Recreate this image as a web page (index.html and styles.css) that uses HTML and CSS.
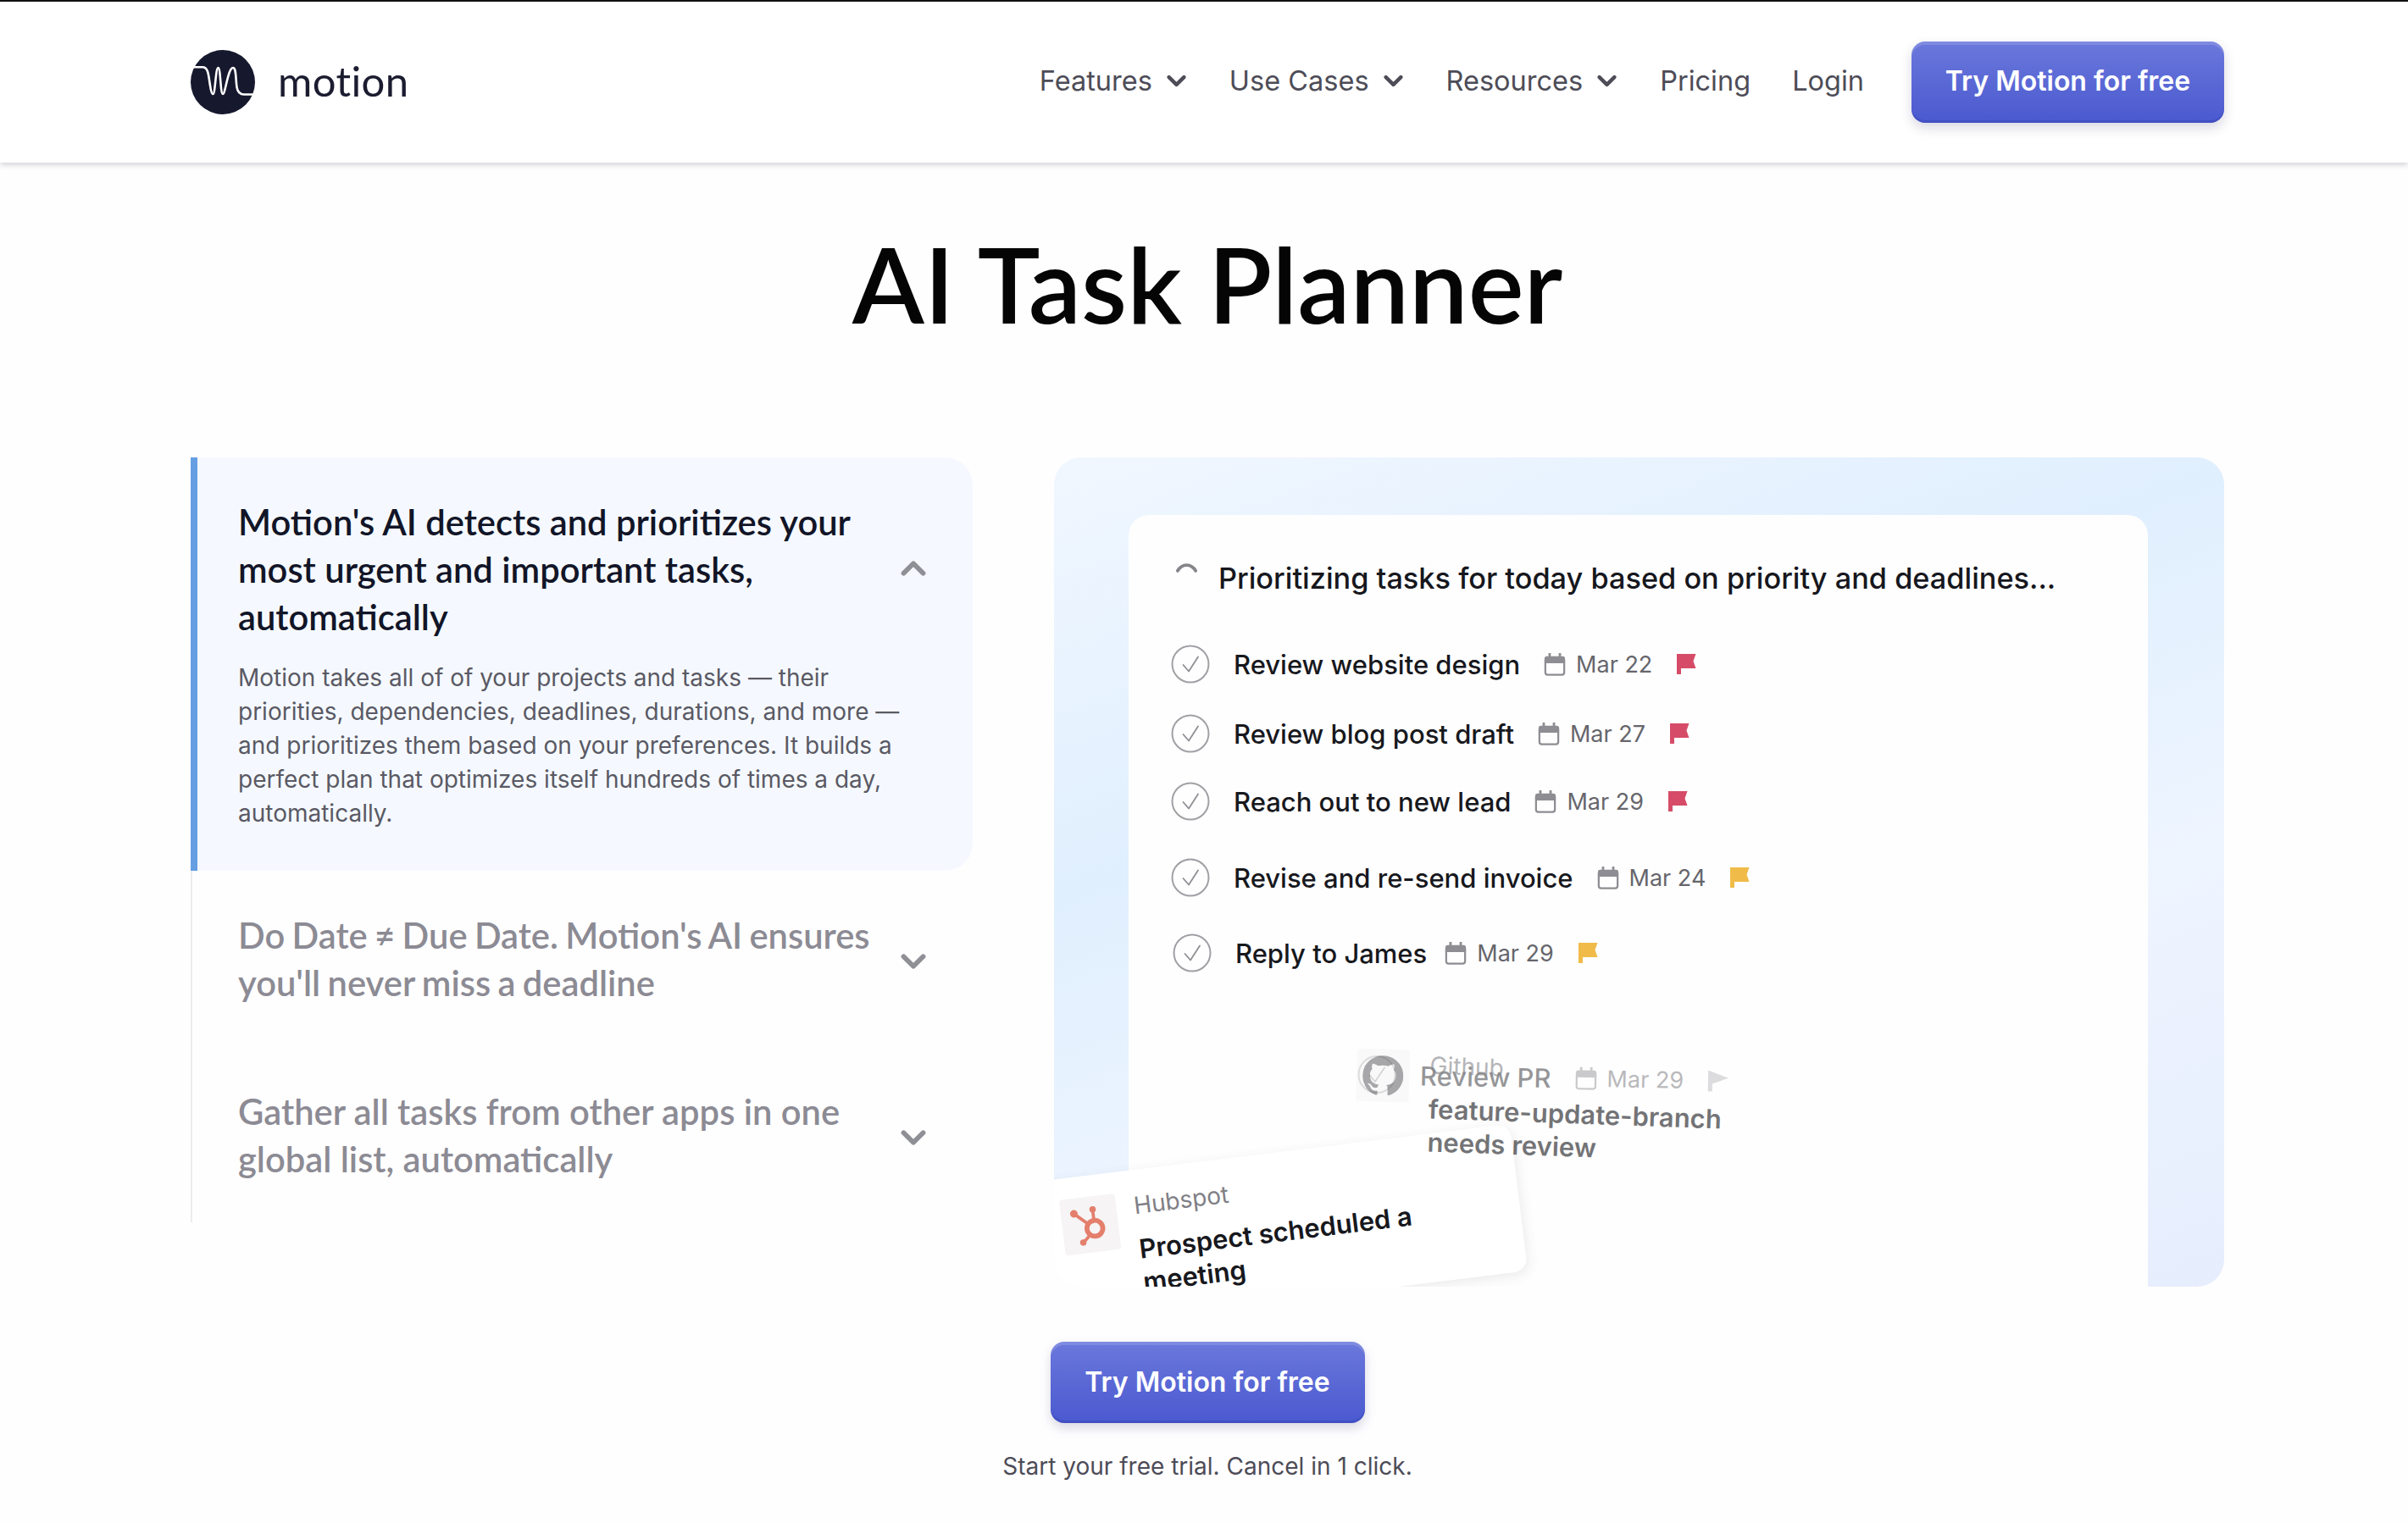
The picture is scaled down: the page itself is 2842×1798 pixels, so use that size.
FILE: index.html
```html
<!DOCTYPE html>
<html lang="en">
  <head>
    <meta charset="UTF-8" />
    <meta name="viewport" content="width=device-width, initial-scale=1.0" />
    <title>AI Task Planner - Motion</title>
    <link rel="stylesheet" href="styles.css">
  </head>
  <body>
    <svg class="icon-defs" width="0" height="0">
      <symbol id="chev-down" viewBox="0 0 26 16"><path d="M3 3l10 10L23 3" fill="none" stroke="currentColor" stroke-width="5" stroke-linecap="round" stroke-linejoin="round"/></symbol>
      <symbol id="chev-up" viewBox="0 0 26 16"><path d="M3 13L13 3l10 10" fill="none" stroke="currentColor" stroke-width="5" stroke-linecap="round" stroke-linejoin="round"/></symbol>
      <symbol id="check" viewBox="0 0 46 46"><circle cx="23" cy="23" r="21.5" fill="none" stroke="#a0a0a5" stroke-width="2"/><path d="M14.5 24l6.5 7.5L32 14.5" fill="none" stroke="#8f8f94" stroke-width="1.8" stroke-linecap="round" stroke-linejoin="round"/></symbol>
      <symbol id="cal" viewBox="0 0 28 30"><path d="M6 1h3v4h10V1h3v4h2a3 3 0 0 1 3 3v6H1V8a3 3 0 0 1 3-3h2z" fill="currentColor"/><rect x="2" y="7" width="24" height="21.5" rx="3" fill="none" stroke="currentColor" stroke-width="2.4"/></symbol>
      <symbol id="flag" viewBox="0 0 26 30"><path d="M1 3h22.500l-3 8.500 3 8.500H6v7H1z" fill="currentColor"/></symbol>
      <symbol id="flag-thin" viewBox="0 0 26 30"><path d="M1 3l24 9-19 7v9H1z" fill="currentColor"/></symbol>
    </svg>

    <header class="site-header">
      <div class="header-inner">
        <a class="brand">
          <svg class="brand-mark" viewBox="0 0 76 76">
            <circle cx="38" cy="38" r="38" fill="#16182e"/>
            <path d="M2.500 20.300H14c7 0 7 9.700 9 21.700 1 7 2 10 3.500 10 2.500 0 3-31 6-31s2.500 31 5.500 31 6-31 12-31c4 0 3 13 4.500 23 1 6 3.500 8.500 8.500 8.500h12" fill="none" stroke="#fff" stroke-width="2.600" stroke-linecap="round"/>
          </svg>
          <span class="brand-name">motion</span>
        </a>
        <nav class="nav">
          <a class="nav-link">Features <svg class="nav-chev"><use href="#chev-down"/></svg></a>
          <a class="nav-link">Use Cases <svg class="nav-chev"><use href="#chev-down"/></svg></a>
          <a class="nav-link">Resources <svg class="nav-chev"><use href="#chev-down"/></svg></a>
          <a class="nav-link">Pricing</a>
          <a class="nav-link">Login</a>
          <a class="btn nav-btn">Try Motion for free</a>
        </nav>
      </div>
    </header>

    <main class="page">
      <h1 class="title">AI Task Planner</h1>

      <section class="columns">
        <div class="accordion">
          <div class="acc-item acc-open">
            <div class="acc-head">
              <h3>Motion's AI detects and prioritizes your most urgent and important tasks, automatically</h3>
              <svg class="acc-chev"><use href="#chev-up"/></svg>
            </div>
            <p>Motion takes all of of your projects and tasks — their priorities, dependencies, deadlines, durations, and more — and prioritizes them based on your preferences. It builds a perfect plan that optimizes itself hundreds of times a day, automatically.</p>
          </div>
          <div class="acc-item acc-tight">
            <div class="acc-head">
              <h3>Do Date ≠ Due Date. Motion's AI ensures you'll never miss a deadline</h3>
              <svg class="acc-chev"><use href="#chev-down"/></svg>
            </div>
          </div>
          <div class="acc-item">
            <div class="acc-head">
              <h3>Gather all tasks from other apps in one global list, automatically</h3>
              <svg class="acc-chev"><use href="#chev-down"/></svg>
            </div>
          </div>
        </div>

        <div class="demo">
          <div class="demo-card">
            <div class="status-line">
              <svg class="spinner" viewBox="0 0 28 14"><path d="M3 11c3-5 7-7 11-7s8 2 11 7" fill="none" stroke="#85858a" stroke-width="4" stroke-linecap="round"/></svg>
              <span>Prioritizing tasks for today based on priority and deadlines...</span>
            </div>
            <ul class="tasks">
              <li class="task">
                <svg class="task-check"><use href="#check"/></svg>
                <span class="task-name">Review website design</span>
                <span class="task-date"><svg class="cal"><use href="#cal"/></svg>Mar 22</span>
                <svg class="flag flag-red"><use href="#flag"/></svg>
              </li>
              <li class="task">
                <svg class="task-check"><use href="#check"/></svg>
                <span class="task-name">Review blog post draft</span>
                <span class="task-date"><svg class="cal"><use href="#cal"/></svg>Mar 27</span>
                <svg class="flag flag-red"><use href="#flag"/></svg>
              </li>
              <li class="task">
                <svg class="task-check"><use href="#check"/></svg>
                <span class="task-name">Reach out to new lead</span>
                <span class="task-date"><svg class="cal"><use href="#cal"/></svg>Mar 29</span>
                <svg class="flag flag-red"><use href="#flag"/></svg>
              </li>
              <li class="task">
                <svg class="task-check"><use href="#check"/></svg>
                <span class="task-name">Revise and re-send invoice</span>
                <span class="task-date"><svg class="cal"><use href="#cal"/></svg>Mar 24</span>
                <svg class="flag flag-yellow"><use href="#flag"/></svg>
              </li>
              <li class="task task-last">
                <svg class="task-check"><use href="#check"/></svg>
                <span class="task-name">Reply to James</span>
                <span class="task-date"><svg class="cal"><use href="#cal"/></svg>Mar 29</span>
                <svg class="flag flag-yellow"><use href="#flag"/></svg>
              </li>
            </ul>
          </div>

          <div class="task ghost-task">
            <svg class="task-check"><use href="#check"/></svg>
            <span class="task-name">Review PR</span>
            <span class="task-date"><svg class="cal"><use href="#cal"/></svg>Mar 29</span>
            <svg class="flag flag-grey"><use href="#flag-thin"/></svg>
          </div>

          <div class="float-card hubspot-card">
            <div class="float-logo">
              <svg viewBox="0 0 40 40">
                <g fill="none" stroke="#e47f6c" stroke-linecap="round">
                  <circle cx="24" cy="24" r="7.500" stroke-width="4.600"/>
                  <path d="M24 16V7M18 19L7 9M18.500 30L12 36" stroke-width="3"/>
                </g>
                <circle cx="24" cy="6" r="3" fill="#e47f6c"/>
                <circle cx="6" cy="8" r="3.600" fill="#e47f6c"/>
                <circle cx="11.500" cy="36" r="3" fill="#e47f6c"/>
              </svg>
            </div>
            <div class="float-text">
              <span class="float-source">Hubspot</span>
              <span class="float-msg">Prospect scheduled a<br>meeting</span>
            </div>
          </div>

          <div class="float-card github-card">
            <div class="float-logo">
              <svg viewBox="0 0 24 24"><path fill="#6f6f73" d="M12 .3a12 12 0 0 0-3.800 23.400c.6.1.8-.3.8-.6v-2c-3.300.7-4-1.600-4-1.600-.6-1.400-1.400-1.800-1.400-1.800-1-.7.1-.7.1-.7 1.200.1 1.800 1.200 1.800 1.200 1 1.800 2.800 1.300 3.500 1 .1-.8.4-1.300.8-1.600-2.700-.3-5.500-1.300-5.500-6 0-1.200.5-2.300 1.300-3.100-.2-.4-.6-1.600 0-3.200 0 0 1-.3 3.400 1.200a11.500 11.500 0 0 1 6 0c2.300-1.500 3.300-1.200 3.300-1.200.6 1.600.2 2.800 0 3.200.9.8 1.300 1.900 1.300 3.200 0 4.600-2.800 5.600-5.500 5.900.5.4.9 1 .9 2.200v3.300c0 .3.1.7.8.6A12 12 0 0 0 12 .3"/></svg>
            </div>
            <div class="float-text">
              <span class="float-source">Github</span>
              <span class="float-msg">feature-update-branch<br>needs review</span>
            </div>
          </div>
        </div>
      </section>

      <div class="cta">
        <a class="btn">Try Motion for free</a>
        <p>Start your free trial. Cancel in 1 click.</p>
      </div>
    </main>
  </body>
</html>
```

FILE: styles.css
```css
body {
  margin: 0;
  background-color: #fffeff;
  font-family: Inter, "Liberation Sans", sans-serif;
  color: #4d4c57;
}
.icon-defs {
  position: absolute;
}
h1,
h3,
p,
ul {
  margin: 0;
  padding: 0;
}

/* header */
.site-header {
  height: 190px;
  background-color: #fff;
  border-top: 2px solid #111;
  box-shadow: 0 3px 6px rgba(30, 30, 50, 0.18);
}
.header-inner {
  width: 2400px;
  height: 190px;
  margin-left: 225px;
  display: flex;
  align-items: center;
  justify-content: space-between;
}
.brand {
  display: flex;
  align-items: center;
  gap: 27px;
}
.brand-mark {
  width: 76px;
  height: 76px;
}
.brand-name {
  font-family: Lato, sans-serif;
  font-size: 49px;
  letter-spacing: 0.4px;
  color: #1b1c30;
  margin-bottom: 4px;
}
.nav {
  display: flex;
  align-items: center;
  gap: 49px;
}
.nav-link {
  display: flex;
  align-items: center;
  gap: 17px;
  font-size: 32.5px;
  color: #4d4c57;
  margin-bottom: 3px;
}
.nav-chev {
  width: 23px;
  height: 15px;
  margin-right: 2px;
}
.btn {
  display: inline-block;
  box-sizing: border-box;
  width: 369px;
  height: 96px;
  line-height: 94px;
  text-align: center;
  font-size: 32px;
  font-weight: 600;
  color: #fff;
  border-radius: 16px;
  background: linear-gradient(#6b78dc, #4a59cf);
  box-shadow: inset 0 4px 0 rgba(255, 255, 255, 0.14), inset 0 -3px 0 rgba(40, 50, 160, 0.25), 0 6px 14px rgba(60, 60, 110, 0.2);
}
.nav-btn {
  margin-left: 7px;
}

/* hero */
.page {
  width: 2400px;
  margin-left: 225px;
}
.title {
  margin-top: 67px;
  text-align: center;
  font-family: Lato, sans-serif;
  font-size: 124px;
  line-height: 150px;
  font-weight: 600;
  color: #050505;
}
.columns {
  margin-top: 131px;
  display: flex;
  gap: 96px;
}

/* accordion */
.accordion {
  width: 923px;
  height: 903px;
  flex-shrink: 0;
  border-left: 2px solid #ececee;
  box-sizing: border-box;
}
.acc-item {
  padding: 48px 55px 0 54px;
  height: 208px;
  box-sizing: border-box;
}
.acc-open {
  height: 488px;
  margin-left: -2px;
  background-color: #f5f9ff;
  border-left: 8px solid #659fe2;
  border-radius: 0 32px 32px 0;
  padding-left: 48px;
}
.acc-head {
  display: flex;
  align-items: center;
  justify-content: space-between;
}
.acc-head h3 {
  font-family: Lato, sans-serif;
  font-size: 41.7px;
  line-height: 56px;
  font-weight: 600;
  color: #8c8b94;
  width: 770px;
}
.acc-open h3 {
  color: #121527;
}
.acc-tight h3 {
  word-spacing: -2px;
}
.acc-chev {
  width: 30px;
  height: 20px;
  flex-shrink: 0;
  margin-top: 6px;
  color: #8f8f96;
}
.acc-open .acc-chev {
  margin-top: -2px;
}
.acc-open p {
  margin-top: 24px;
  font-size: 28px;
  line-height: 40px;
  color: #5a5964;
}

/* demo panel */
.demo {
  position: relative;
  width: 1381px;
  height: 979px;
  flex-shrink: 0;
  overflow: hidden;
  border-radius: 32px;
  background: linear-gradient(160deg, #f1f7ff 0%, #e0effe 35%, #eef5ff 65%, #e6edfd 100%);
}
.demo-card {
  box-sizing: border-box;
  height: 911px;
  margin: 68px 90px 0 88px;
  padding: 54px 48px 0 50px;
  background-color: #fefefe;
  border-radius: 24px 24px 0 0;
}
.status-line {
  display: flex;
  align-items: center;
  gap: 24px;
  margin-left: 5px;
  font-size: 34.3px;
  font-weight: 500;
  color: #16171d;
}
.spinner {
  width: 27px;
  height: 14px;
  margin-bottom: 26px;
}
.tasks {
  list-style: none;
  margin-top: 58px;
}
.task {
  display: flex;
  align-items: center;
  height: 46px;
  margin-bottom: 36px;
}
.task:nth-child(2) {
  margin-bottom: 34px;
}
.task:nth-child(3) {
  margin-bottom: 44px;
}
.task:nth-child(4) {
  margin-bottom: 43px;
}
.task-last {
  margin-left: 2px;
}
.task-last .task-date {
  margin-left: 21px;
}
.task-check {
  width: 46px;
  height: 46px;
  margin-right: 28px;
  flex-shrink: 0;
}
.task-name {
  font-size: 31px;
  font-weight: 500;
  color: #17181d;
}
.task-date {
  display: flex;
  align-items: center;
  gap: 12px;
  margin-left: 28px;
  font-size: 27px;
  color: #66666c;
}
.cal {
  width: 26px;
  height: 28px;
  color: #8d8d93;
}
.flag {
  width: 26px;
  height: 30px;
  margin-left: 28px;
}
.flag-red {
  color: #d64c68;
}
.flag-yellow {
  color: #f0bb48;
}
.flag-grey {
  color: #b5b5b9;
}

/* floating things that drift over the panel */
.ghost-task {
  position: absolute;
  left: 358px;
  top: 709px;
  margin: 0;
  opacity: 0.45;
  transform: rotate(1deg);
}
.float-card {
  position: absolute;
  display: flex;
  gap: 26px;
}
.float-logo {
  width: 62px;
  height: 62px;
  flex-shrink: 0;
  display: flex;
  align-items: center;
  justify-content: center;
  background-color: #f6f4f5;
  border-radius: 4px;
}
.float-text span {
  display: block;
}
.float-source {
  font-size: 28px;
  color: #808086;
}
.float-msg {
  margin-top: 15px;
  font-size: 31px;
  line-height: 39px;
  font-weight: 600;
  color: #17181d;
}
.github-card {
  left: 356px;
  top: 705px;
  gap: 24px;
  opacity: 0.6;
  transform: rotate(2deg);
}
.github-card .float-logo {
  background-color: rgba(240, 240, 240, 0.5);
}
.github-card .float-logo svg {
  width: 48px;
  height: 48px;
}
.github-card .float-source {
  color: #86868a;
}
.github-card .float-msg {
  margin-top: 15px;
}
.hubspot-card {
  left: -20px;
  top: 855px;
  box-sizing: border-box;
  width: 562px;
  height: 175px;
  gap: 21px;
  padding: 25px 0 0 23px;
  background-color: #fff;
  border-radius: 0 16px 16px 0;
  box-shadow: 2px 4px 14px rgba(70, 70, 90, 0.1);
  transform-origin: top left;
  transform: rotate(-7deg);
}
.hubspot-card .float-logo {
  width: 66px;
  height: 66px;
}
.hubspot-card .float-logo svg {
  width: 50px;
  height: 50px;
}

/* bottom call to action */
.cta {
  margin-top: 65px;
  text-align: center;
}
.cta .btn {
  width: 371px;
  line-height: 96px;
}
.cta p {
  margin-top: 34px;
  font-size: 28px;
  color: #4d4c57;
}
```
